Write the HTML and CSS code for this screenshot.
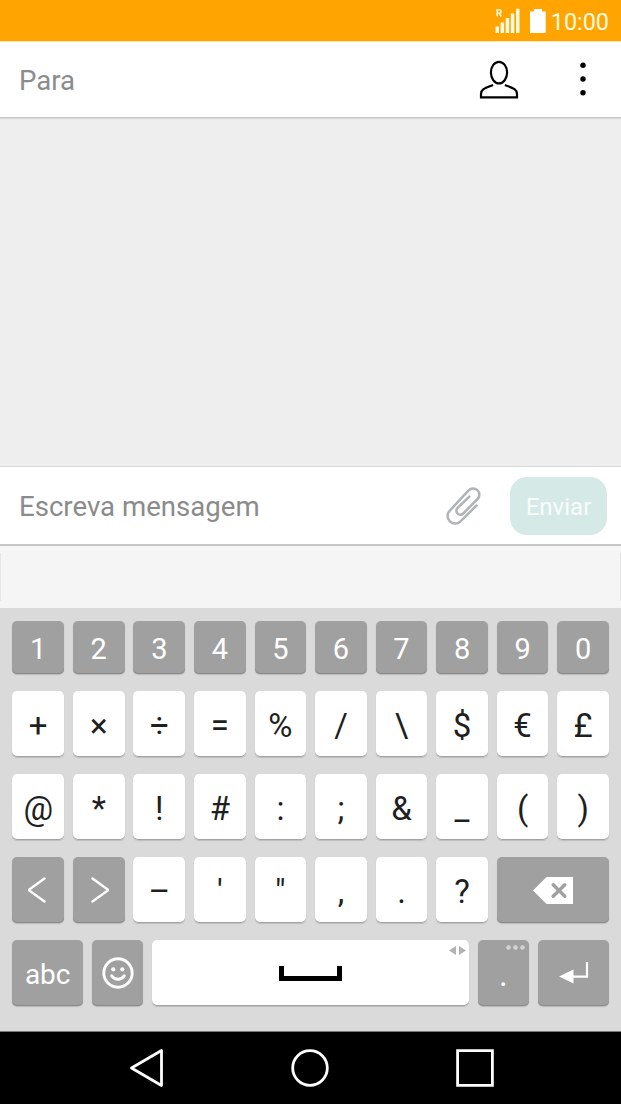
FILE: index.html
```html
<!DOCTYPE html>
<html lang="pt">
<head>
  <meta charset="UTF-8" />
  <title>Nova mensagem</title>
  <link rel="stylesheet" href="styles.css">
</head>
<body>

  <div class="status-bar">
    <svg class="signal" width="26" height="26" viewBox="0 0 26 26">
      <path d="M2.200 8.500V1.800h2a1.700 1.700 0 0 1 0 3.500h-2M4.200 5.300l2 3.200" fill="none" stroke="#fffbe0" stroke-width="1.500"/>
      <path d="M.5 18.500h3.500v6.500h-3.500zM5.600 14.500h3.500v10.500h-3.500zM10.700 10h3.500v15h-3.500zM15.800 5.500h3.500v19.500h-3.500zM21 .8h3.500v24.200h-3.500z" fill="#fffbe0"/>
    </svg>
    <svg class="battery" width="16" height="24" viewBox="0 0 16 24">
      <path d="M4 0h8v2.500h3.700V24H0V2.500h4z" fill="#fff"/>
    </svg>
    <span class="clock">10:00</span>
  </div>

  <div class="to-bar">
    <span class="placeholder">Para</span>
    <svg class="contact" width="40" height="40" viewBox="0 0 40 40" fill="none" stroke="#000" stroke-width="2.200">
      <ellipse cx="20" cy="12.600" rx="8.100" ry="10.800"/>
      <path d="M14.100 25C6.500 28 2 29 2 34v3.300h36V34c0-5-4.500-6-12.100-9"/>
    </svg>
    <svg class="more" width="6" height="34" viewBox="0 0 6 34">
      <circle cx="3" cy="3.200" r="2.700"/>
      <circle cx="3" cy="17" r="2.700"/>
      <circle cx="3" cy="30.800" r="2.700"/>
    </svg>
  </div>

  <div class="messages"></div>

  <div class="compose">
    <span class="placeholder">Escreva mensagem</span>
    <svg class="clip" width="36" height="38" viewBox="0 0 36 38" fill="none" stroke="#b0b4b7" stroke-width="2.500" stroke-linecap="round" stroke-linejoin="round">
      <path d="M30.500 18.500L14.500 34.300A7.500 7.500 0 0 1 3.800 23.700L22.600 3.300A6.200 6.200 0 0 1 31.600 11.900L17.200 26.500A3.900 3.900 0 0 1 11.500 21L23.300 9.600"/>
    </svg>
    <button type="button" class="send">Enviar</button>
  </div>

  <div class="suggestions"></div>

  <div class="keyboard">
    <div class="row numbers">
      <div class="key dark">1</div>
      <div class="key dark">2</div>
      <div class="key dark">3</div>
      <div class="key dark">4</div>
      <div class="key dark">5</div>
      <div class="key dark">6</div>
      <div class="key dark">7</div>
      <div class="key dark">8</div>
      <div class="key dark">9</div>
      <div class="key dark">0</div>
    </div>
    <div class="row">
      <div class="key">+</div>
      <div class="key">×</div>
      <div class="key">÷</div>
      <div class="key">=</div>
      <div class="key">%</div>
      <div class="key">/</div>
      <div class="key">\</div>
      <div class="key">$</div>
      <div class="key">€</div>
      <div class="key">£</div>
    </div>
    <div class="row">
      <div class="key">@</div>
      <div class="key">*</div>
      <div class="key">!</div>
      <div class="key">#</div>
      <div class="key">:</div>
      <div class="key">;</div>
      <div class="key">&amp;</div>
      <div class="key">_</div>
      <div class="key">(</div>
      <div class="key">)</div>
    </div>
    <div class="row">
      <div class="key dark icon">
        <svg width="20" height="26" viewBox="0 0 20 26" fill="none" stroke="#fff" stroke-width="2.400" stroke-linecap="round" stroke-linejoin="round"><path d="M16.500 1.500L.5 13l16 11.500"/></svg>
      </div>
      <div class="key dark icon">
        <svg width="20" height="26" viewBox="0 0 20 26" fill="none" stroke="#fff" stroke-width="2.400" stroke-linecap="round" stroke-linejoin="round"><path d="M4 1.500L20 13 4 24.500" transform="translate(-.5)"/></svg>
      </div>
      <div class="key">–</div>
      <div class="key">'</div>
      <div class="key">"</div>
      <div class="key">,</div>
      <div class="key">.</div>
      <div class="key">?</div>
      <div class="key dark icon wide">
        <svg width="40" height="27" viewBox="0 0 40 27"><path d="M0 13.500L13.500 0H40v27H13.500z" fill="#fff"/><path d="M20.200 7.700l11.600 11.600M31.800 7.700L20.200 19.300" stroke="#a0a0a0" stroke-width="3.400" stroke-linecap="round"/></svg>
      </div>
    </div>
    <div class="row bottom">
      <div class="key dark abc">abc</div>
      <div class="key dark icon">
        <svg width="32" height="32" viewBox="0 0 32 32" fill="none" stroke="#fff" stroke-width="2.900" stroke-linecap="round"><circle cx="16" cy="16" r="14.200"/><path d="M9.700 18.800c2.800 4.600 9.800 4.600 12.600 0"/><g fill="#fff" stroke="none"><circle cx="11.300" cy="12.300" r="2.100"/><circle cx="20.300" cy="12.300" r="2.100"/></g></svg>
      </div>
      <div class="key icon space">
        <svg width="63" height="15" viewBox="0 0 63 15"><path d="M2.500 0v12.500h58V0" fill="none" stroke="#000" stroke-width="5"/></svg>
        <svg class="hint arrows" width="17" height="9" viewBox="0 0 17 9"><path d="M0 4.500L7 0v9zM17 4.500L10 0v9z" fill="#b2b2b2"/></svg>
      </div>
      <div class="key dark">.
        <svg class="hint dots" width="19" height="5" viewBox="0 0 19 5" fill="#d4d4d4"><circle cx="2.500" cy="2.500" r="2.300"/><circle cx="9.500" cy="2.500" r="2.300"/><circle cx="16.500" cy="2.500" r="2.300"/></svg>
      </div>
      <div class="key dark icon">
        <svg width="30" height="22" viewBox="0 0 30 22"><path d="M0 14.500L14.500 7.500v14z" fill="#fff"/><path d="M14 14.700h14V0" fill="none" stroke="#fff" stroke-width="2.200"/></svg>
      </div>
    </div>
  </div>

  <div class="nav-bar">
    <svg width="34" height="38" viewBox="0 0 34 38" fill="none" stroke="#fff" stroke-width="2.800" stroke-linejoin="round"><path d="M1.500 19L31.500 1.500v35z"/></svg>
    <svg width="38" height="38" viewBox="0 0 38 38" fill="none" stroke="#fff" stroke-width="2.800"><circle cx="19" cy="19" r="17.300"/></svg>
    <svg width="38" height="38" viewBox="0 0 38 38" fill="none" stroke="#fff" stroke-width="2.800"><path d="M1.600 1.600h34.800v34.800H1.600z"/></svg>
  </div>

</body>
</html>
```

FILE: styles.css
```css
* {
  box-sizing: border-box;
}
body {
  margin: 0;
  height: 1104px;
  display: flex;
  flex-direction: column;
  font-family: Roboto, sans-serif;
  background: #eee;
  overflow: hidden;
}
svg {
  display: block;
  flex: none;
}

/* status bar */
.status-bar {
  height: 41px;
  display: flex;
  justify-content: flex-end;
  align-items: center;
  padding: 1px 12px 0 0;
  background: #ffa400;
}
.battery {
  margin: 0 5px 0 9px;
}
.clock {
  padding-top: 2px;
  color: #fffbe0;
  font-size: 23.400px;
}

/* recipient */
.to-bar {
  height: 77px;
  display: flex;
  align-items: center;
  padding: 0 35px 0 19px;
  background: #fff;
  border-top: 1px solid #ffe9b0;
  border-bottom: 1px solid #c8c8c8;
  box-shadow: 0 1px 1px #d8d8d8;
}
.placeholder {
  flex: 1;
  padding-top: 2px;
  color: #8b8b8b;
  font-size: 27.600px;
}
.contact {
  margin-right: 61px;
}
.more {
  margin-bottom: 2px;
}
.messages {
  flex: 1;
}

/* message field */
.compose {
  height: 80px;
  display: flex;
  align-items: center;
  padding: 0 14px 0 19px;
  background: #fff;
  border-top: 1px solid #d8d8d8;
  border-bottom: 2px solid #c6c6c6;
}
.clip {
  margin-right: 28px;
}
.send {
  width: 97px;
  height: 58px;
  padding: 3px 0 0;
  border: none;
  border-radius: 17px;
  background: #d5e9e6;
  color: #f8fdfc;
  font-family: inherit;
  font-size: 24px;
}
.suggestions {
  height: 62px;
  background: linear-gradient(#e6e6e6, #e6e6e6) 0 7px / 1px 48px no-repeat,
    linear-gradient(#e6e6e6, #e6e6e6) 100% 7px / 1px 48px no-repeat,
    #f5f5f5;
}

/* keyboard */
.keyboard {
  height: 423px;
  display: flex;
  flex-direction: column;
  gap: 17px;
  padding: 13px 12px 0 12.400px;
  background: #dadada;
}
.row {
  height: 66px;
  display: grid;
  grid-template-columns: repeat(10, 1fr);
  column-gap: 8.900px;
}
.numbers {
  height: 53px;
}
.bottom {
  grid-template-columns: 70.600px 51.600px 1fr 51.600px 71px;
}
.key {
  position: relative;
  display: flex;
  justify-content: center;
  align-items: center;
  padding-top: 2px;
  border-radius: 5px;
  background: #fff;
  box-shadow: inset 0 -1px #a3a3a3, 0 1px 1px #bdbdbd;
  color: #1f1f1f;
  font-size: 33px;
}
.dark {
  background: #a0a0a0;
  box-shadow: inset 0 -1px #8b8b8b, 0 1px 1px #b9b9b9;
  color: #fff;
}
.numbers .key {
  padding-top: 3px;
  font-size: 29px;
}
.icon {
  padding-top: 0;
}
.wide {
  grid-column: span 2;
}
.abc {
  font-size: 28px;
}
.hint {
  position: absolute;
}
.arrows {
  top: 6px;
  right: 3px;
}
.dots {
  top: 5px;
  right: 4px;
}

/* navigation */
.nav-bar {
  height: 73px;
  display: flex;
  align-items: center;
  gap: 127px;
  padding-left: 130px;
  background: #000;
  border-top: 1px solid #777;
}
```
